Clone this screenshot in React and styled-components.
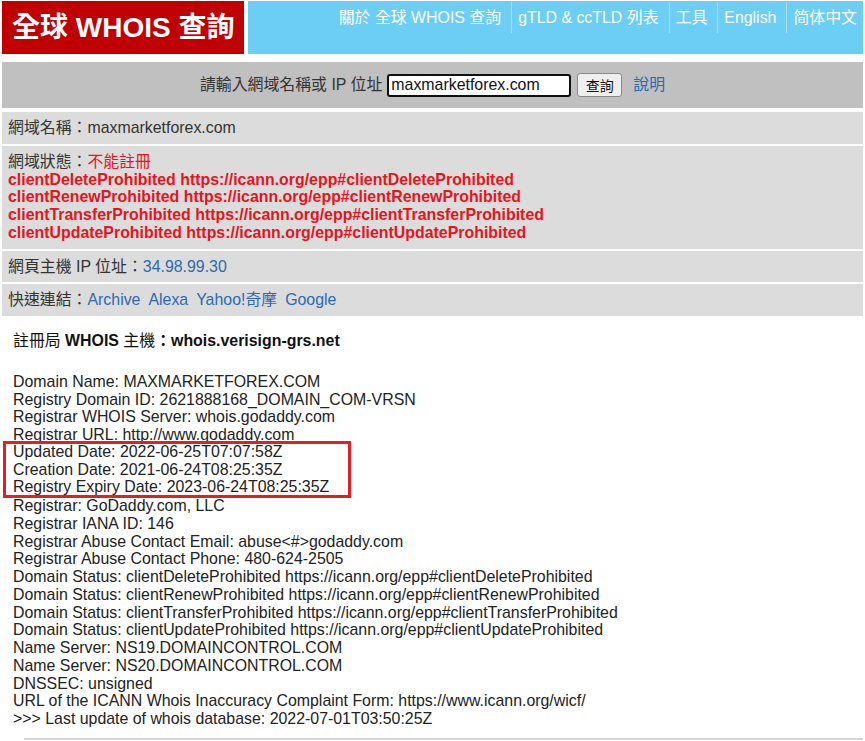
import styled, { createGlobalStyle } from "styled-components";

const GlobalStyle = createGlobalStyle`
  body {
    margin: 0;
    background: #fff;
    font-family: "Liberation Sans", Arial, "Noto Sans CJK TC", sans-serif;
    font-size: 15.9px;
    line-height: 17.75px;
    color: #222;
  }
`;

const Page = styled.div`
  padding: 1px 2px 0 2px;
`;

const Header = styled.div`
  display: flex;
  gap: 4px;
  height: 53px;
`;

const Logo = styled.div`
  width: 242px;
  background: #c00000;
  color: #fff;
  font-weight: bold;
  font-size: 28px;
  display: flex;
  align-items: center;
  padding-left: 10px;
  box-sizing: border-box;
  white-space: nowrap;
`;

const NavBar = styled.div`
  flex: 1;
  background: #6dcef5;
  display: flex;
  justify-content: flex-end;
  align-items: flex-start;
  padding-top: 1px;
`;

const NavItem = styled.a`
  color: #fff;
  height: 31px;
  line-height: 31px;
  padding: 0 ${(p) => (p.$last ? "6px" : "10px")} 0 6px;
  white-space: nowrap;
  border-left: ${(p) => (p.$first ? "none" : "1px solid #a8e2f8")};
`;

const SearchBar = styled.div`
  margin-top: 8px;
  height: 46px;
  background: #c0c0c0;
  display: flex;
  align-items: center;
  justify-content: center;
  color: #333;
`;

const Label = styled.span`
  margin-right: 5px;
`;

const Input = styled.input`
  width: 184px;
  height: 23px;
  box-sizing: border-box;
  border: 2px solid #111;
  border-radius: 3px;
  padding: 0 2px;
  font: inherit;
  color: #111;
  background: #fff;
  outline: none;
`;

const Button = styled.button`
  margin-left: 6px;
  width: 45px;
  height: 24px;
  background: #efefef;
  border: 1px solid #8a8a8a;
  border-radius: 3px;
  font-family: inherit;
  font-size: 14px;
  color: #111;
  padding: 0;
`;

const HelpLink = styled.a`
  margin-left: 11px;
  color: #2a6ab0;
`;

const Rows = styled.div`
  margin-top: 4px;
  display: flex;
  flex-direction: column;
  gap: 2px;
`;

const InfoRow = styled.div`
  background: #dcdcdc;
  padding: 7px 6px;
  color: #333;
`;

const Red = styled.span`
  color: #e8141c;
`;

const StatusLine = styled.div`
  color: #e8141c;
  font-weight: bold;
`;

const Link = styled.a`
  color: #2a6ab0;
  margin-right: ${(p) => (p.$gap ? "8px" : "0")};
`;

const Whois = styled.div`
  padding: 16px 11px 0 11px;
`;

const Title = styled.div`
  color: #111;
  b {
    font-weight: bold;
  }
`;

const Dump = styled.div`
  margin-top: 23px;
  color: #222;
`;

const Line = styled.div`
  white-space: pre;
`;

const Highlight = styled.div`
  margin-left: -8px;
  padding-left: 8px;
  width: 336px;
  outline: 3px solid #e41e26;
  outline-offset: -1px;
  position: relative;
  top: -1px;
`;

const Rule = styled.div`
  margin: 10px 0 0 22px;
  border-top: 2px solid #d6d6d6;
`;

const before = [
  "Domain Name: MAXMARKETFOREX.COM",
  "Registry Domain ID: 2621888168_DOMAIN_COM-VRSN",
  "Registrar WHOIS Server: whois.godaddy.com",
  "Registrar URL: http://www.godaddy.com",
];

const dates = [
  "Updated Date: 2022-06-25T07:07:58Z",
  "Creation Date: 2021-06-24T08:25:35Z",
  "Registry Expiry Date: 2023-06-24T08:25:35Z",
];

const after = [
  "Registrar: GoDaddy.com, LLC",
  "Registrar IANA ID: 146",
  "Registrar Abuse Contact Email: abuse<#>godaddy.com",
  "Registrar Abuse Contact Phone: 480-624-2505",
  "Domain Status: clientDeleteProhibited https://icann.org/epp#clientDeleteProhibited",
  "Domain Status: clientRenewProhibited https://icann.org/epp#clientRenewProhibited",
  "Domain Status: clientTransferProhibited https://icann.org/epp#clientTransferProhibited",
  "Domain Status: clientUpdateProhibited https://icann.org/epp#clientUpdateProhibited",
  "Name Server: NS19.DOMAINCONTROL.COM",
  "Name Server: NS20.DOMAINCONTROL.COM",
  "DNSSEC: unsigned",
  "URL of the ICANN Whois Inaccuracy Complaint Form: https://www.icann.org/wicf/",
  ">>> Last update of whois database: 2022-07-01T03:50:25Z",
];

const statuses = ["clientDeleteProhibited", "clientRenewProhibited", "clientTransferProhibited", "clientUpdateProhibited"];

const navItems = ["關於 全球 WHOIS 查詢", "gTLD & ccTLD 列表", "工具", "English", "简体中文"];

const App = () => {
  return (
    <>
      <GlobalStyle />
      <Page>
        <Header>
          <Logo>全球 WHOIS 查詢</Logo>
          <NavBar>
            {navItems.map((item, i) => (
              <NavItem key={item} $first={i === 0} $last={i === navItems.length - 1}>
                {item}
              </NavItem>
            ))}
          </NavBar>
        </Header>

        <SearchBar>
          <Label>請輸入網域名稱或 IP 位址</Label>
          <Input defaultValue="maxmarketforex.com" />
          <Button>查詢</Button>
          <HelpLink>說明</HelpLink>
        </SearchBar>

        <Rows>
          <InfoRow>網域名稱：maxmarketforex.com</InfoRow>
          <InfoRow>
            網域狀態：<Red>不能註冊</Red>
            {statuses.map((s) => (
              <StatusLine key={s}>
                {s} https://icann.org/epp#{s}
              </StatusLine>
            ))}
          </InfoRow>
          <InfoRow>
            網頁主機 IP 位址：<Link>34.98.99.30</Link>
          </InfoRow>
          <InfoRow>
            快速連結：<Link $gap>Archive</Link>
            <Link $gap>Alexa</Link>
            <Link $gap>Yahoo!奇摩</Link>
            <Link>Google</Link>
          </InfoRow>
        </Rows>

        <Whois>
          <Title>
            註冊局 <b>WHOIS</b> 主機<b>：whois.verisign-grs.net</b>
          </Title>
          <Dump>
            {before.map((l) => (
              <Line key={l}>{l}</Line>
            ))}
            <Highlight>
              {dates.map((l) => (
                <Line key={l}>{l}</Line>
              ))}
            </Highlight>
            {after.map((l) => (
              <Line key={l}>{l}</Line>
            ))}
          </Dump>
        </Whois>
        <Rule />
      </Page>
    </>
  );
};

export default App;
